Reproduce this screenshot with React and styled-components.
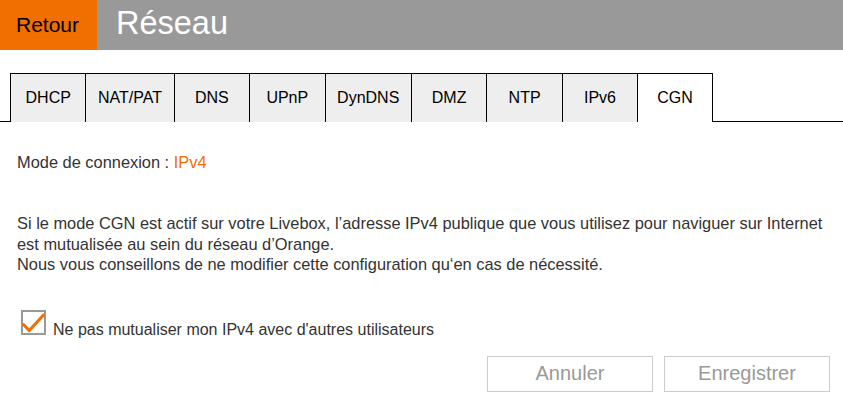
import React from 'react';
import styled, { createGlobalStyle } from 'styled-components';

const ORANGE = '#f16e00';

const GlobalStyle = createGlobalStyle`
  html, body {
    margin: 0;
    padding: 0;
    background: #fff;
  }

  body {
    font-family: "Liberation Sans", Arial, sans-serif;
    color: #333;
  }
`;

const Page = styled.div`
  width: 843px;
  height: 408px;
  overflow: hidden;
  display: flex;
  flex-direction: column;
`;

const Header = styled.header`
  height: 50px;
  display: flex;
  align-items: stretch;
  background: #999;
`;

const BackButton = styled.button`
  width: 97px;
  border: 0;
  margin: 0;
  padding: 0 0 0 16px;
  text-align: left;
  background: ${ORANGE};
  color: #000;
  font-family: inherit;
  font-size: 21px;
  cursor: pointer;
`;

const Title = styled.h1`
  margin: 0;
  padding: 0 0 4px 19px;
  display: flex;
  align-items: center;
  color: #fff;
  font-size: 32.5px;
  font-weight: normal;
  line-height: 1;
`;

const TabBar = styled.nav`
  margin-top: 23px;
  padding-left: 10px;
  display: flex;
  border-bottom: 1px solid #000;
`;

const Tab = styled.div`
  box-sizing: border-box;
  min-width: 75.45px;
  height: 49px;
  margin-bottom: -1px;
  padding: 0 11.6px 1px;
  display: flex;
  align-items: center;
  justify-content: center;
  border-top: 1px solid #000;
  border-left: 1px solid #000;
  border-right: ${(p) => (p.$last ? '1px solid #000' : '0')};
  background: ${(p) => (p.$active ? '#fff' : '#eee')};
  color: #000;
  font-size: 16px;
  white-space: nowrap;
`;

const Content = styled.main`
  padding: 30px 17px 0 17px;
  font-size: 16.4px;
  line-height: 20px;
`;

const ModeLine = styled.p`
  margin: 0;
`;

const ModeValue = styled.span`
  color: ${ORANGE};
`;

const Notice = styled.p`
  margin: 41px 0 0;
  line-height: 20.5px;
`;

const CheckRow = styled.label`
  margin: 35px 0 0 4px;
  display: flex;
  align-items: baseline;
  gap: 7px;
  font-size: 16px;
  cursor: pointer;
`;

const CheckBox = styled.svg`
  width: 25px;
  height: 25px;
  flex: none;
`;

const Actions = styled.div`
  margin-top: 16px;
  padding-right: 13px;
  display: flex;
  justify-content: flex-end;
  gap: 11px;
`;

const ActionButton = styled.button`
  box-sizing: border-box;
  width: 166px;
  height: 36px;
  margin: 0;
  padding: 0;
  border: 1px solid #ccc;
  background: #fff;
  color: #999;
  font-family: inherit;
  font-size: 20px;
`;

const tabs = ['DHCP', 'NAT/PAT', 'DNS', 'UPnP', 'DynDNS', 'DMZ', 'NTP', 'IPv6', 'CGN'];

const Checkmark = () => (
  <CheckBox viewBox="0 0 25 25">
    <rect x="1" y="1" width="23" height="23" fill="#fff" stroke="#999" strokeWidth="2" />
    <path
      d="M2.5 14.5 L8.3 20.6 L22.3 5.2"
      fill="none"
      stroke={ORANGE}
      strokeWidth="3"
      strokeLinecap="round"
      strokeLinejoin="round"
    />
  </CheckBox>
);

export default function App() {
  return (
    <Page>
      <GlobalStyle />
      <Header>
        <BackButton type="button">Retour</BackButton>
        <Title>Réseau</Title>
      </Header>
      <TabBar>
        {tabs.map((name, i) => (
          <Tab key={name} $active={name === 'CGN'} $last={i === tabs.length - 1}>
            {name}
          </Tab>
        ))}
      </TabBar>
      <Content>
        <ModeLine>
          Mode de connexion : <ModeValue>IPv4</ModeValue>
        </ModeLine>
        <Notice>
          Si le mode CGN est actif sur votre Livebox, l’adresse IPv4 publique que vous utilisez pour naviguer sur Internet
          est mutualisée au sein du réseau d’Orange.
          <br />
          Nous vous conseillons de ne modifier cette configuration qu‘en cas de nécessité.
        </Notice>
        <CheckRow>
          <Checkmark />
          <span>Ne pas mutualiser mon IPv4 avec d&apos;autres utilisateurs</span>
        </CheckRow>
      </Content>
      <Actions>
        <ActionButton type="button">Annuler</ActionButton>
        <ActionButton type="button">Enregistrer</ActionButton>
      </Actions>
    </Page>
  );
}
